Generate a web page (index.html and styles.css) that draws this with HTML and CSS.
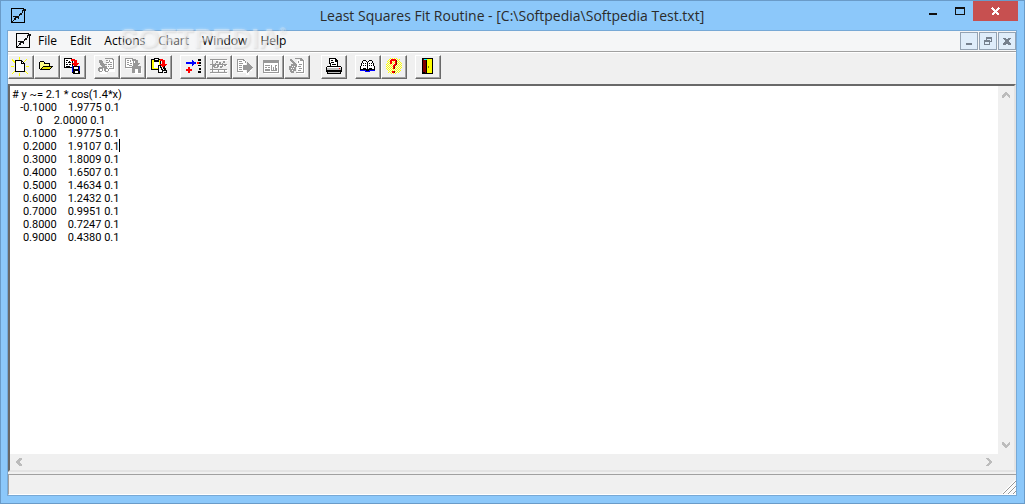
FILE: index.html
```html
<!DOCTYPE html>
<html lang="en">
<head>
<meta charset="utf-8">
<title>Least Squares Fit Routine</title>
<link rel="stylesheet" href="styles.css">
</head>
<body>
<svg class="defs" aria-hidden="true">
  <symbol id="plot" viewBox="0 0 16 16"><path class="ink-line" d="M1.5 .5V14.5H14.5V2M1 .5H14"/><path class="ink" d="M4 10h2v2H4zM5 8h2v2H5zM7 8h2v2H7zM9 6h1v2H9zM10 5h2v2h-2zM12 2h1v3h-1zM13 1h3v2h-3zM3 12h1v1H3zM2 13h1v1H2zM3 8h2v1H3zM8 10h1v1H8z"/></symbol>
</svg>
<div class="window">
  <header class="titlebar">
    <svg class="app-icon" width="16" height="16"><use href="#plot"/></svg>
    <h1 class="title">Least Squares Fit Routine - [C:\Softpedia\Softpedia Test.txt]</h1>
    <div class="captions">
      <button class="caption" aria-label="Minimize"><svg width="10" height="10"><path class="ink" d="M1 7h8v2H1z"/></svg></button>
      <button class="caption" aria-label="Maximize"><svg width="10" height="10"><path class="ink" d="M0 1h10v8H0zM1 3v5h8V3z" fill-rule="evenodd"/></svg></button>
      <button class="caption close" aria-label="Close"><svg width="10" height="10"><path d="M1 2l7 7M8 2l-7 7" stroke="#fff" stroke-width="2"/></svg></button>
    </div>
  </header>
  <main class="client">
    <nav class="menubar">
      <svg class="doc-icon" width="16" height="16"><use href="#plot"/></svg>
      <button class="menu">File</button>
      <button class="menu">Edit</button>
      <button class="menu">Actions</button>
      <button class="menu" disabled>Chart</button>
      <button class="menu">Window</button>
      <button class="menu">Help</button>
      <div class="mdi">
        <button class="mdi-button" aria-label="Minimize document"><svg width="8" height="8"><path d="M1 6h6v2H1z"/></svg></button>
        <button class="mdi-button" aria-label="Restore document"><svg width="8" height="8"><path d="M2 0h6v5H6V4h1V2H3v1H2zM0 3h6v5H0zM1 5v2h4V5z" fill-rule="evenodd"/></svg></button>
        <button class="mdi-button" aria-label="Close document"><svg width="8" height="8"><path d="M0 1h3v1h2V1h3v1H7v1H6v2h1v1h1v2H5V7H3v1H0V6h1V5h1V3H1V2H0z"/></svg></button>
      </div>
    </nav>
    <div class="toolbar" role="toolbar">
      <div class="group">
        <button class="tool" aria-label="New"><svg viewBox="2 2 22 20"><path stroke="#ff0" stroke-width="1" d="M4 4.500l4 4M19 4l-4 4M4 19l4-4M20 19l-4-4M3 11.500h3M18 11.500h3M11.500 2v3M11.500 18v3"/><path d="M7 5h7v1h1v1h1v1h1v9H7z"/><path fill="#fff" d="M8 6h5v3h3v7H8z"/><path fill="#fff" d="M14 7h1v1h-1z"/></svg></button>
        <button class="tool" aria-label="Open"><svg viewBox="2 2 22 20"><path d="M6 6h4v1h1v1h5v3h3v1h-1v1h-1v1h-1v1H6v-1H5V7h1z"/><path fill="#ff8" d="M6 7h4v2h5v2H9v1H8v1H7v1H6z"/><path fill="#e0e000" d="M9 12h8v1h-1v1H8v-1h1z"/></svg></button>
        <button class="tool" aria-label="Save"><svg viewBox="2 2 22 20"><path d="M4 3h8v1h1v9H4z"/><path fill="#fff" d="M5 4h6v2h1v6H5z"/><path d="M6 5h2v1H6zM9 6h1v1H9zM6 7h1v1H6zM8 7h3v1H8zM6 9h2v1H6zM9 9h2v1H9zM6 11h4v1H6z"/><path fill="#f00" d="M11 4h4v1h2v3h2v1h-1v1h-1v1h-1v1h-1v-1h-1v-1h-1V9h-1V8h2V6h-3z"/><path d="M12 11h8v8h-7v-1h-1z"/><path fill="#00f" d="M12 11h1v6h-1zM19 11h1v5h-1z"/><path fill="#fff" d="M14 12h4v2h-4zM15 16h3v2h-3z"/></svg></button>
      </div>
      <div class="group">
        <button class="tool" aria-label="Cut" disabled><svg viewBox="2 2 22 20"><path class="light" d="M13 5h8v12h-8zM6 14h7v5H6z"/><path class="dim" d="M11 3h8v1h1v10h-6v-1h5V5h-1V4h-7zM5 5h3v1h1v2h1v1h3v1h-2v1h2v2h2v3h-1v1h-3v-1h-1v-3H9v3H8v1H5v-1H4v-3h1v-1h3v-1H7v-1H6V8H5zM6 14v2h2v-2zM12 14v2h2v-2zM12 5h2v1h-2zM15 5h1v2h-1zM12 7h3v1h-3zM16 7h2v1h-2zM14 9h4v1h-4zM14 11h1v1h-1zM16 11h2v1h-2z" fill-rule="evenodd"/></svg></button>
        <button class="tool" aria-label="Copy" disabled><svg viewBox="2 2 22 20"><path class="light" d="M6 4h9v10H6zM14 13h8v6h-8z"/><path class="dim" d="M5 3h8v1h1v9H5zM6 4v8h7V5h-1V4zM7 5h2v1H7zM10 5h1v2h-1zM7 7h2v1H7zM10 8h2v1h-2zM7 9h2v1H7zM9 10h3v1H9z" fill-rule="evenodd"/><path class="dim" d="M12 4h4v1h2v3h2v1h-1v1h-1v1h3v7h-3v-4h-3v4h-3v-7h2V9h-1V8h2V6h-3z"/></svg></button>
        <button class="tool" aria-label="Paste"><svg viewBox="2 2 22 20"><path d="M5 4h3V3h5v1h2v11H5z"/><path fill="#ff0" d="M6 5h2v2h5V5h1v9H6z"/><path fill="#fff" d="M8 7h5v6H8zM9 4h3v1H9z"/><path fill="#f00" d="M14 4h3v1h2v4h2v1h-1v1h-1v1h-1v1h-1v-1h-1v-1h-1v-1h-1V9h2V6h-2z"/><path d="M12 10h2v1h1v1h1v2h1v1h1v1h-1v2h-5z"/><path fill="#fff" d="M13 11h1v2h1v2h1v2h-3z"/><path d="M18 11h1v2h1v2h1v3h-3v-1h2v-1h-2v-2h-1v-2h1z"/></svg></button>
      </div>
      <div class="group">
        <button class="tool" aria-label="Add data"><svg viewBox="2 2 22 20"><path fill="#00f" d="M6 7h6V5h1v1h1v1h2v2h-2v1h-1v1h-1V9H6z"/><path fill="#f00" d="M8 12h2v2h2v2h-2v2H8v-2H6v-2h2zM17 7h2v2h-2z"/><path d="M18 4h3v2h-3zM19 7h2v2h-2zM18 10h3v1h-3zM19 13h2v2h-2zM18 16h3v2h-3z"/></svg></button>
        <button class="tool" aria-label="Chart" disabled><svg viewBox="2 2 22 20"><path class="light" d="M5 5h17v1H5zM5 10h17v1H5zM5 15h17v1H5zM5 18h17v1H5z"/><path class="dim" d="M4 4h17v1H4zM6 4h1v14H6zM4 9h17v1H4zM4 14h17v1H4zM4 17h17v1H4zM7 10h2v2H7zM9 8h1v3H9zM10 6h2v2h-2zM11 10h2v2h-2zM13 7h2v3h-2zM14 11h2v2h-2zM16 8h1v4h-1zM17 6h2v2h-2zM18 10h2v1h-2zM8 12h4v1H8zM18 15h1v2h-1zM12 15h1v2h-1z"/></svg></button>
        <button class="tool" aria-label="Run" disabled><svg viewBox="2 2 22 20"><path class="light" d="M6 5h8v13H6zM14 17h3v3h-3zM17 15h3v1h-3z"/><path class="dim" d="M5 4h7v1h1v1h1v2h-1V6h-2V5H6v11h5v1H5zM7 6h3v1H7zM7 8h4v1H7zM7 10h3v1H7zM7 12h3v1H7zM7 14h3v1H7zM11 10h4V7h1v1h1v1h1v1h1v1h1v1h1v1h-1v1h-1v1h-1v1h-1v1h-1v1h-1v-3h-4z"/></svg></button>
        <button class="tool" aria-label="Report" disabled><svg viewBox="2 2 22 20"><path class="light" d="M6 6h16v13H6z"/><path class="dim" d="M5 5h16v13H5zM6 8v9h14V8zM7 10h5v1H7zM7 12h2v1H7zM10 12h2v1h-2zM7 14h5v2H7zM13 10h1v5h1v-3h1v3h1v-5h2v1h-1v2h1v3h-6z" fill-rule="evenodd"/></svg></button>
        <button class="tool" aria-label="Clear" disabled><svg viewBox="2 2 22 20"><path class="light" d="M13 5h8v14h-8z"/><path class="dim" d="M11 3h7v1h1v1h1v13h-8v-1h7V6h-3V4h-5zM6 4h2v1h1v1h1v1h1v1h1v1h1v3h-1v4h-2v2H7v-1H6v-2H5v-4h2V9h2V8H8V7H7V6H6zM14 6h1v2h-1zM15 9h3v1h-3zM14 11h3v1h-3zM15 13h3v1h-3zM14 15h3v1h-3z"/><path class="light" d="M8 11h1v1H8zM10 11h1v1h-1zM7 13h1v1H7zM9 13h1v1H9zM8 15h1v1H8z"/></svg></button>
      </div>
      <div class="group wide">
        <button class="tool" aria-label="Print"><svg viewBox="2 2 22 20"><path d="M8 3h7v1h1v1h1v6h3v1h1v5h-1v2H6v-2H5v-5h1v-1h3V9H8z"/><path fill="#fff" d="M9 4h5v3h2v4h-6V8H9zM6 12h14v1H6z"/><path d="M10 5h2v1h-2zM10 7h3v1h-3zM11 9h4v1h-4z"/><path fill="#c0c0c0" d="M6 13h14v2H6zM7 17h12v1H7z"/><path fill="#f00" d="M18 13h1v1h-1z"/></svg></button>
      </div>
      <div class="group">
        <button class="tool" aria-label="Manual"><svg viewBox="2 2 22 20"><path d="M8 5h3v1h1v1h1V6h1V5h3v1h1v2h1v3h1v4h-6v1h-3v-1H5v-4h1V8h1V6h1z"/><path fill="#fff" d="M8 6h3v1h1v7h-1v-1H8v1H6v-3h1V8h1zM14 6h3v2h1v3h1v3h-2v-1h-3v1h-1V7h1z"/><path d="M8 8h1v1H8zM10 8h1v1h-1zM8 10h1v1H8zM10 10h1v1h-1zM14 8h1v1h-1zM16 8h1v1h-1zM14 10h1v1h-1zM16 10h1v1h-1z"/><path fill="#00f" d="M5 15h6v1h3v-1h6v1h-5v1h-5v-1H5z"/></svg></button>
        <button class="tool" aria-label="Help"><svg viewBox="2 2 22 20"><path class="halo" d="M9 3.500H17M8 4.500H19M7 5.500H19M6 6.500H20M7 7.500H20M6 8.500H21M5 9.500H21M6 10.500H21M5 11.500H21M6 12.500H21M5 13.500H21M6 14.500H20M7 15.500H20M8 16.500H19M7 17.500H19M10 18.500H16"/><path fill="#f00" d="M10 4h5v1h1v5h-1v1h-1v3h-2v-4h1V9h1V6h-3v3H9V5h1zM11 16h3v2h-3z"/><path fill="#800000" d="M15 5h1v5h-1zM13 11h1v3h-1zM13 16h1v2h-1z"/></svg></button>
      </div>
      <div class="group">
        <button class="tool" aria-label="Exit"><svg viewBox="2 2 22 20"><path d="M7 3h11v16H7z"/><path fill="#ff0" d="M12 4h5v14h-5z"/><path fill="#800000" d="M8 4h1v1h2v1h1v12h-2v-1H8z"/><path fill="#0ff" d="M9 4h3v1H9z"/><path d="M11 6h1v12h-1z"/><path fill="#808000" d="M13 11h1v2h-1z"/></svg></button>
      </div>
    </div>
    <div class="editor">
      <textarea class="text" aria-label="Data" spellcheck="false" wrap="off"># y ~= 2.1 * cos(1.4*x)
   -0.1000    1.9775 0.1
         0    2.0000 0.1
    0.1000    1.9775 0.1
    0.2000    1.9107 0.1
    0.3000    1.8009 0.1
    0.4000    1.6507 0.1
    0.5000    1.4634 0.1
    0.6000    1.2432 0.1
    0.7000    0.9951 0.1
    0.8000    0.7247 0.1
    0.9000    0.4380 0.1</textarea>
      <span class="caret"></span>
      <div class="scroll vertical"><svg width="8" height="6"><path d="M3 0h2l3 4v2H7L4 3 1 6H0V4z"/></svg><svg width="8" height="6"><path d="M3 6h2l3-4V0H7L4 3 1 0H0v2z"/></svg></div>
      <div class="scroll horizontal"><svg width="6" height="8"><path d="M0 3v2l4 3h2V7L3 4l3-3V0H4z"/></svg><svg width="6" height="8"><path d="M6 3v2L2 8H0V7l3-3-3-3V0h2z"/></svg></div>
    </div>
    <footer class="status"><svg class="grip" width="14" height="14"><path d="M1 14L14 1M6 14l8-8M11 14l3-3" stroke="#fff" stroke-width="3"/><path d="M1 14L14 1M6 14l8-8M11 14l3-3" stroke="#969696" stroke-width="1"/></svg></footer>
  </main>
  <div class="watermark" aria-hidden="true">SOFTPEDIA<span class="mark">®</span></div>
</div>
</body>
</html>
```
FILE: styles.css
```css
* { box-sizing: border-box; }
body { margin: 0; font-family: "Open Sans", "Noto Sans", sans-serif; font-size: 12px; color: #000; }
button { font: inherit; color: inherit; margin: 0; padding: 0; border: 0; background: none; }
svg { display: block; flex: none; shape-rendering: crispEdges; }
.defs { position: absolute; width: 0; height: 0; }
.ink { fill: #101010; }
.ink-line { fill: none; stroke: #000; }
.window { position: relative; display: flex; flex-direction: column; height: 100vh; padding: 0 7px 7px 6px; border: 1px solid #6a9bc8; background: #8cc8fa; }
.titlebar { display: flex; align-items: center; height: 29px; flex: none; }
.app-icon { margin-left: 3px; }
.title { flex: 1; margin: 0 0 0 79px; font-size: 14px; line-height: 20px; font-weight: 400; text-align: center; white-space: nowrap; color: #2b2b2b; }
.captions { display: flex; align-self: flex-start; margin-right: -1px; }
.caption { display: flex; align-items: center; justify-content: center; width: 27px; height: 20px; }
.close { width: 45px; background: #c75050; }
.client { flex: 1; min-height: 0; display: flex; flex-direction: column; border: 1px solid #77a9d6; background: #f0f0f0; }
.menubar { display: flex; align-items: center; gap: 1px; height: 20px; flex: none; padding-left: 7px; background: #f5f6f7; }
.menu { padding: 0 6px; line-height: 20px; }
.menu:disabled { color: #5a5a5a; }
.mdi { display: flex; gap: 1px; margin-left: auto; }
.mdi-button { display: grid; place-items: center; width: 18px; height: 18px; border: 1px solid #94a3b3; background: #dfedfa; fill: #76818e; }
.toolbar { display: flex; gap: 8px; height: 33px; flex: none; padding: 3px 0; border-top: 1px solid #a0a0a0; box-shadow: inset 0 1px #fff; }
.group { display: flex; }
.wide { margin-left: 3px; }
.tool { width: 26px; height: 24px; border: 1px solid; border-color: #fff #696969 #696969 #fff; box-shadow: inset -1px -1px #a0a0a0; padding: 1px; }
.tool svg { width: 22px; height: 20px; }
.dim { fill: #989898; }
.light { fill: #fff; }
.halo { fill: #ffffc0; stroke: #ff0; stroke-width: 1; stroke-dasharray: 1 1; }
.editor { position: relative; flex: 1; min-height: 0; display: grid; grid-template: 1fr 16px / 1fr 16px; border: 2px solid; border-color: #696969 #e3e3e3 #e3e3e3 #696969; }
.text { border: 0; outline: 0; resize: none; overflow: hidden; padding: 2px; font: 11px/13px Roboto, "Liberation Sans", sans-serif; color: #000; background: #fff; white-space: pre; }
.caret { position: absolute; left: 109px; top: 53px; width: 1px; height: 13px; background: #000; }
.scroll { display: flex; justify-content: space-between; align-items: center; fill: #bcbcbc; }
.vertical { flex-direction: column; padding: 6px 0; }
.horizontal { padding: 0 6px; }
.status { display: flex; justify-content: flex-end; align-items: flex-end; height: 21px; flex: none; margin-top: 2px; border-top: 1px solid #a0a0a0; border-left: 1px solid #a0a0a0; border-bottom: 1px solid #fff; }
.grip { shape-rendering: auto; }
.watermark { position: absolute; left: 118px; top: 19px; font: 700 28px/38px "Liberation Sans", Arial, sans-serif; color: rgba(255, 255, 255, .3); text-shadow: 0 0 3px rgba(255, 255, 255, .4), 1px 1px 2px rgba(100, 100, 100, .2); pointer-events: none; }
.mark { font-size: 9px; vertical-align: 14px; line-height: 9px; }
```
